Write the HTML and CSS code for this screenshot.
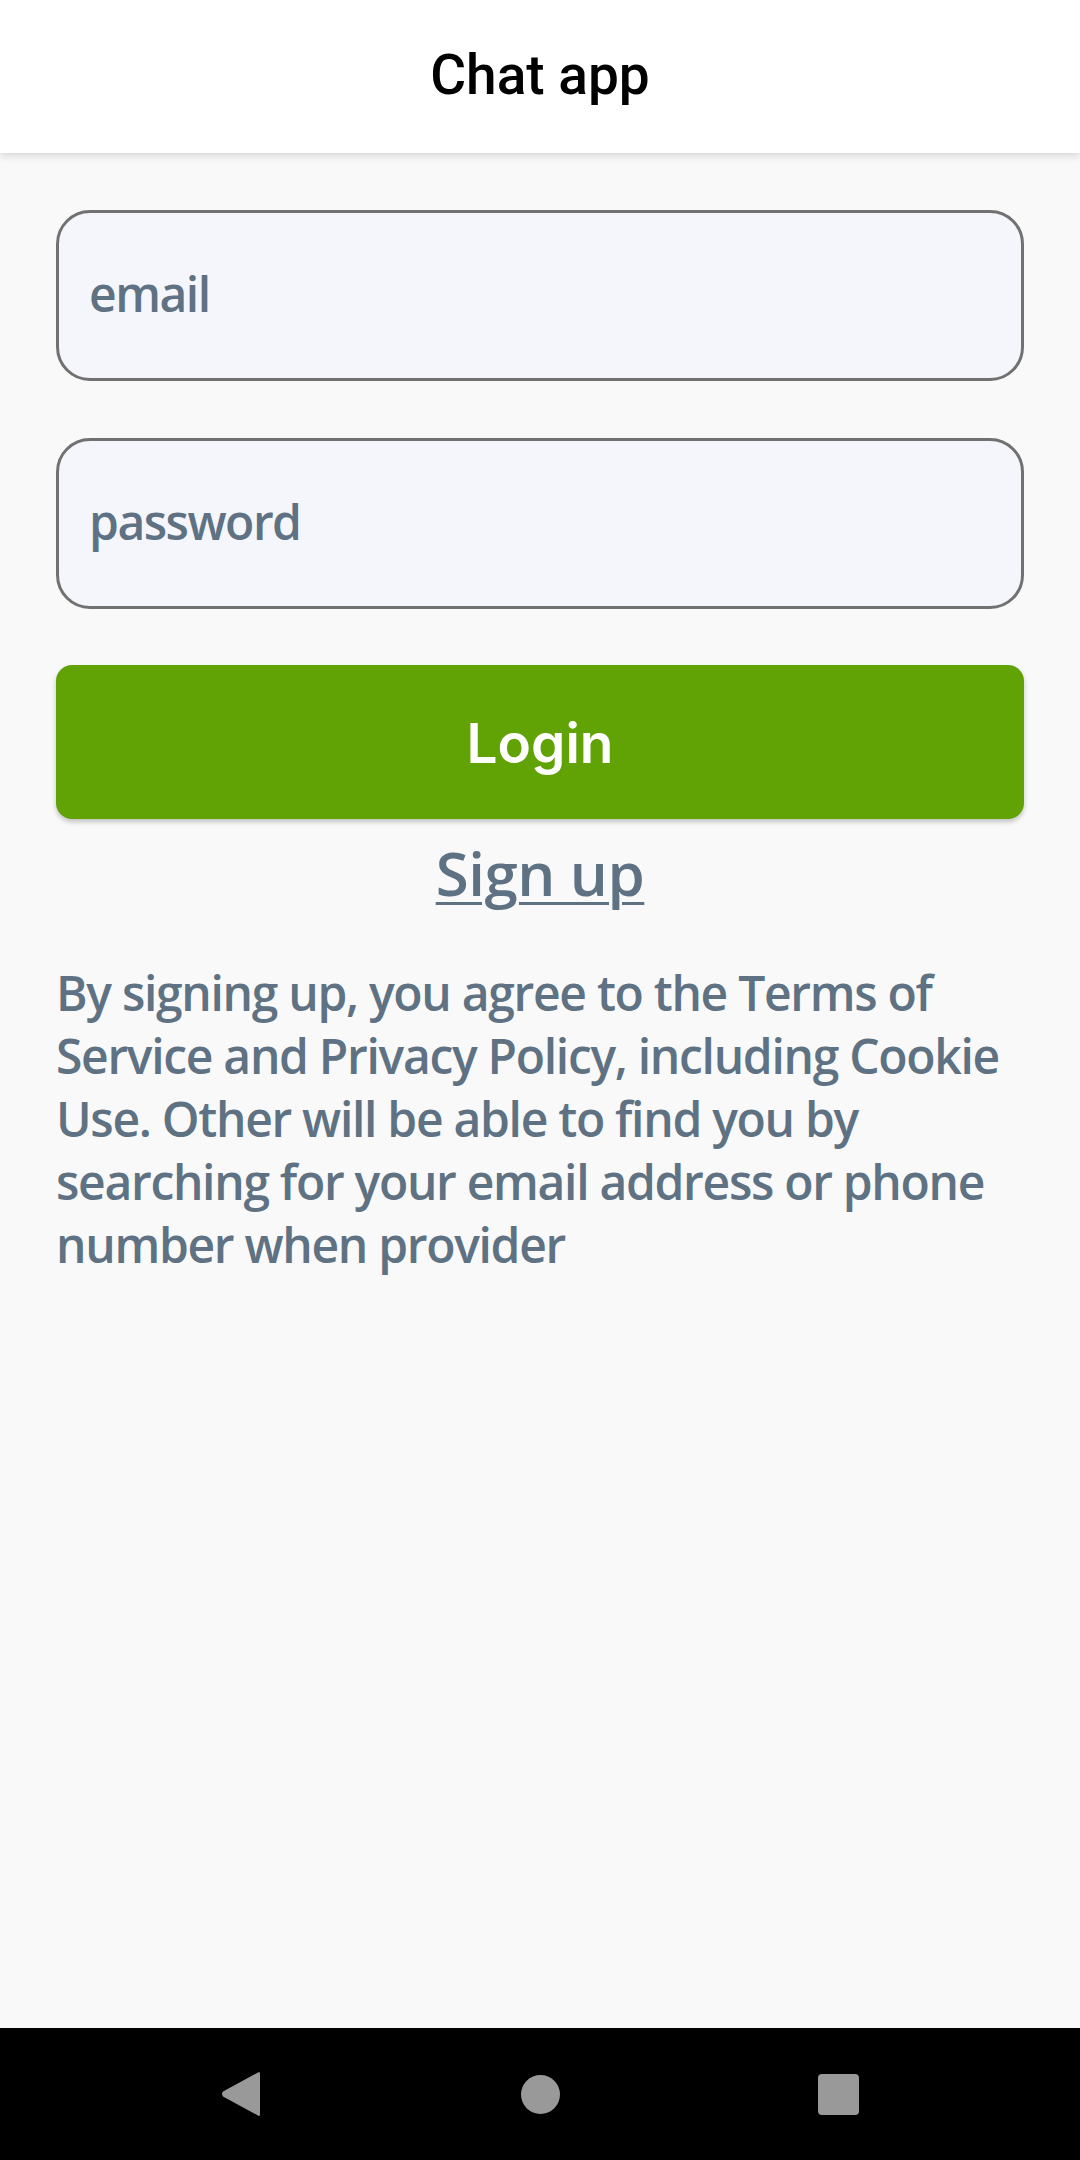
FILE: index.html
```html
<!DOCTYPE html>
<html>
<head>
<meta charset="utf-8">
<link rel="stylesheet" href="styles.css">
</head>
<body>
<div class="screen">
  <header class="appbar"><h1 class="title">Chat app</h1></header>
  <main class="content">
    <div class="field"><span class="placeholder">email</span></div>
    <div class="field"><span class="placeholder">password</span></div>
    <button class="login">Login</button>
    <a class="signup">Sign up</a>
    <p class="terms">By signing up, you agree to the Terms of Service and Privacy Policy, including Cookie Use. Other will be able to find you by searching for your email address or phone number when provider</p>
  </main>
  <nav class="navbar">
    <svg class="nav-icon" width="40" height="46" viewBox="0 0 40 46"><path d="M37 1.5 Q39 0 39 3 V43 Q39 46 37 44.5 L2 25.5 Q0 23 2 20.5 Z" fill="#999"/></svg>
    <span class="home"></span>
    <span class="recent"></span>
  </nav>
</div>
</body>
</html>
```
FILE: styles.css
```css
* { box-sizing: border-box; }
html, body { margin: 0; padding: 0; }
body { background: #f9f9f9; font-family: "Open Sans", "Noto Sans", sans-serif; }
.screen { width: 1080px; height: 2160px; display: flex; flex-direction: column; background: #f9f9f9; }
.appbar {
  height: 153px; background: #ffffff; display: flex; align-items: center; justify-content: center;
  box-shadow: 0 3px 8px rgba(0,0,0,0.14); position: relative; z-index: 1; flex-shrink: 0;
}
.title { margin: 0; font-family: Roboto, sans-serif; font-weight: 500; font-size: 55px; color: #000; padding-bottom: 4px; }
.content { flex: 1; padding: 57px 56px 0; display: flex; flex-direction: column; }
.field {
  height: 171px; border: 3px solid #717171; border-radius: 34px; background: #f5f6fb;
  display: flex; align-items: center; padding-left: 30px; margin-bottom: 57px;
}
.placeholder { font-size: 48px; color: #5e7283; font-weight: 600; letter-spacing: -1.5px; position: relative; top: -2px; }
.login {
  margin-top: -1px; height: 154px; border: none; border-radius: 16px; background: #61a205; color: #fff;
  font-family: Inter, sans-serif; font-weight: 600; font-size: 55px; box-shadow: 0 3px 5px rgba(0,0,0,0.22);
  padding: 0; padding-top: 2px;
}
.signup {
  align-self: center; margin-top: 14px; font-size: 60px; font-weight: 600; letter-spacing: -0.5px; color: #5e7283;
  text-decoration: underline; text-decoration-thickness: 3px; text-underline-offset: 6px; line-height: 80px;
}
.terms { margin: 48px 0 0; font-size: 48px; line-height: 63px; color: #5e7283; font-weight: 600; letter-spacing: -1.3px; }
.navbar { height: 132px; background: #000; display: flex; align-items: center; justify-content: center; gap: 0; flex-shrink: 0; }
.nav-icon { display: block; margin-right: 260px; margin-left: 0; }
.home { width: 39px; height: 39px; border-radius: 50%; background: #999; display: block; }
.recent { width: 41px; height: 41px; border-radius: 4px; background: #999; display: block; margin-left: 258px; }
```
